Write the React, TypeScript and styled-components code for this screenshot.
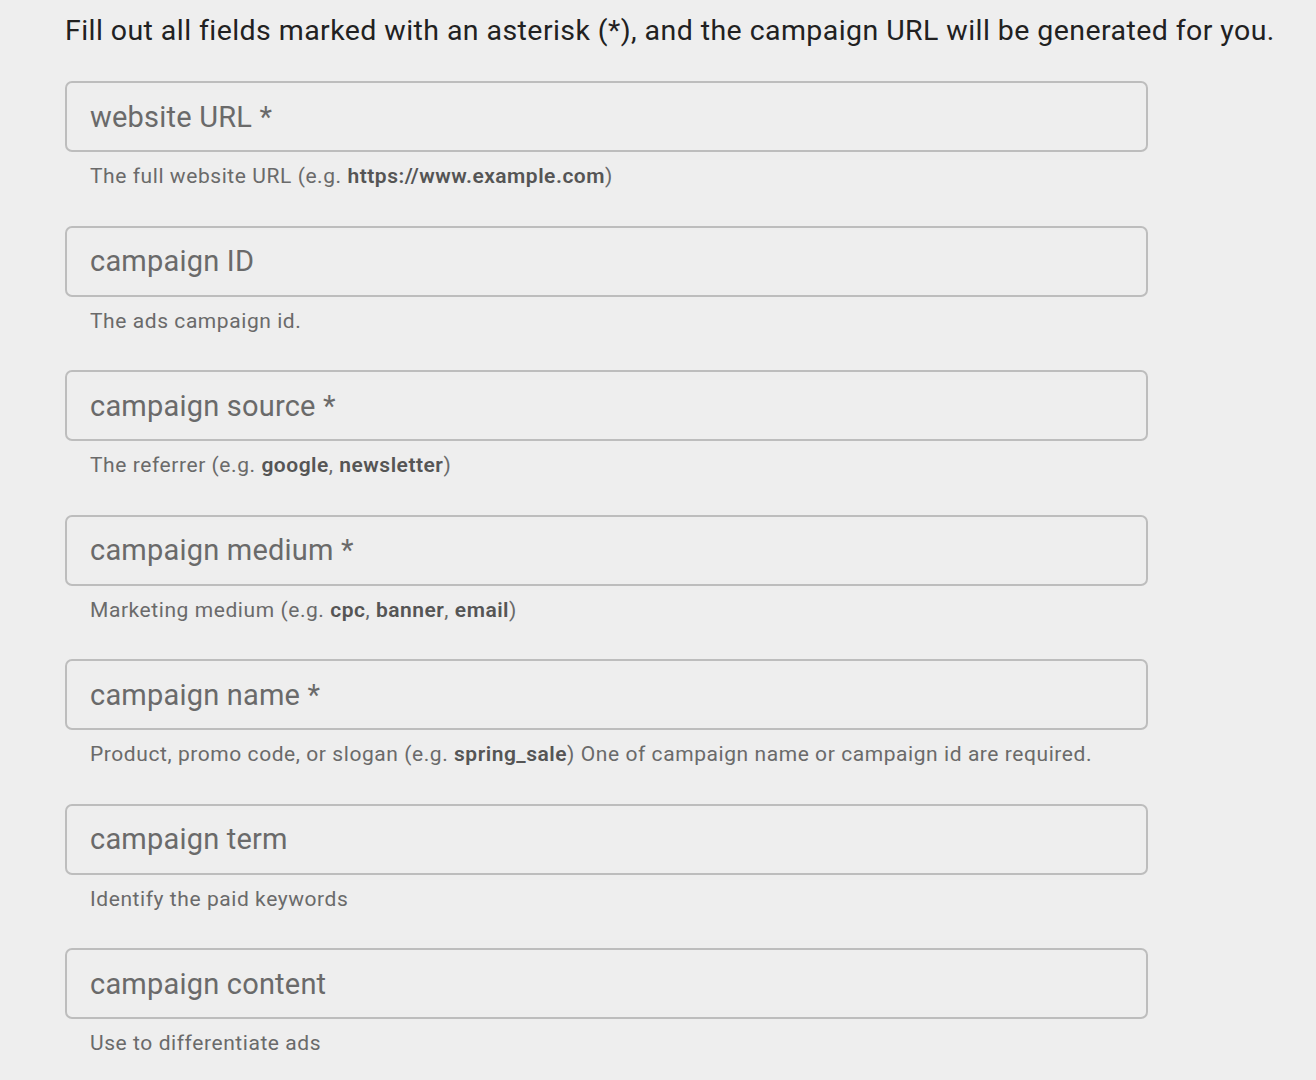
import React from "react";
import styled, { createGlobalStyle } from "styled-components";

const Global = createGlobalStyle`
  html, body { margin: 0; padding: 0; background: #eeeeee; }
  body { font-family: Roboto, "Liberation Sans", sans-serif; }
`;

const Page = styled.div`
  padding: 10px 0 0 65px;
  width: 1083px;
`;

const Intro = styled.p`
  margin: 0 0 29px 0;
  font-size: 28.5px;
  line-height: 42px;
  color: #212121;
  white-space: nowrap;
  letter-spacing: 0.43px;
`;

const Form = styled.form`
  display: flex;
  flex-direction: column;
  gap: 34.5px;
`;

const Field = styled.div`
  display: flex;
  flex-direction: column;
`;

const Input = styled.input`
  box-sizing: border-box;
  width: 1083px;
  height: 71px;
  border: 2px solid #bdbdbd;
  border-radius: 7px;
  background: transparent;
  padding: 0 23px;
  font-family: Roboto, "Liberation Sans", sans-serif;
  font-size: 29px;
  letter-spacing: 0.2px;
  color: #333;
  outline: none;
  &::placeholder {
    color: #6a6a6a;
    opacity: 1;
  }
`;

const Help = styled.div`
  margin-top: 9px;
  padding-left: 25px;
  font-size: 21px;
  line-height: 30px;
  color: #6a6a6a;
  letter-spacing: 0.57px;
  white-space: nowrap;
  b {
    font-weight: 600;
    color: #555;
    letter-spacing: 0.5px;
  }
`;

const fields: { ph: string; help: React.ReactNode }[] = [
  {
    ph: "website URL *",
    help: (
      <>
        The full website URL (e.g. <b>https://www.example.com</b>)
      </>
    ),
  },
  { ph: "campaign ID", help: <>The ads campaign id.</> },
  {
    ph: "campaign source *",
    help: (
      <>
        The referrer (e.g. <b>google</b>, <b>newsletter</b>)
      </>
    ),
  },
  {
    ph: "campaign medium *",
    help: (
      <>
        Marketing medium (e.g. <b>cpc</b>, <b>banner</b>, <b>email</b>)
      </>
    ),
  },
  {
    ph: "campaign name *",
    help: (
      <>
        Product, promo code, or slogan (e.g. <b>spring_sale</b>) One of campaign name or campaign id are required.
      </>
    ),
  },
  { ph: "campaign term", help: <>Identify the paid keywords</> },
  { ph: "campaign content", help: <>Use to differentiate ads</> },
];

export default function App() {
  return (
    <Page>
      <Global />
      <Intro>
        Fill out all fields marked with an asterisk (*), and the campaign URL will be generated for you.
      </Intro>
      <Form>
        {fields.map((f) => (
          <Field key={f.ph}>
            <Input placeholder={f.ph} />
            <Help>{f.help}</Help>
          </Field>
        ))}
      </Form>
    </Page>
  );
}
